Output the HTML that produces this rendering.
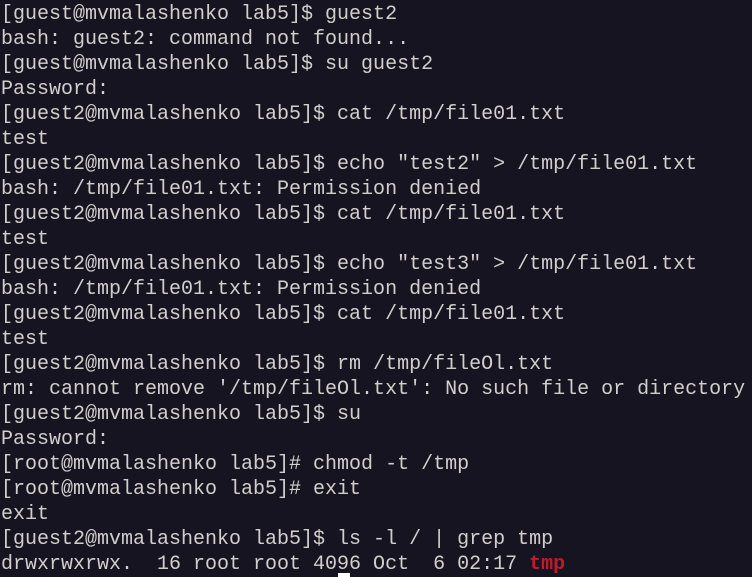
<!DOCTYPE html>
<html><head><style>
html,body{margin:0;padding:0;background:#171421;width:752px;height:577px;overflow:hidden}
pre{margin:0;padding:2px 0 0 1px;font-family:"Liberation Mono","DejaVu Sans Mono",monospace;font-size:20px;line-height:25px;color:#d0cfcc;white-space:pre}
.r{color:#c01c28;font-weight:bold}
.cur{position:absolute;left:338px;top:573px;width:12px;height:4px;background:#fff}
</style></head><body><pre>[guest@mvmalashenko lab5]$ guest2
bash: guest2: command not found...
[guest@mvmalashenko lab5]$ su guest2
Password:
[guest2@mvmalashenko lab5]$ cat /tmp/file01.txt
test
[guest2@mvmalashenko lab5]$ echo "test2" &gt; /tmp/file01.txt
bash: /tmp/file01.txt: Permission denied
[guest2@mvmalashenko lab5]$ cat /tmp/file01.txt
test
[guest2@mvmalashenko lab5]$ echo "test3" &gt; /tmp/file01.txt
bash: /tmp/file01.txt: Permission denied
[guest2@mvmalashenko lab5]$ cat /tmp/file01.txt
test
[guest2@mvmalashenko lab5]$ rm /tmp/fileOl.txt
rm: cannot remove '/tmp/fileOl.txt': No such file or directory
[guest2@mvmalashenko lab5]$ su
Password:
[root@mvmalashenko lab5]# chmod -t /tmp
[root@mvmalashenko lab5]# exit
exit
[guest2@mvmalashenko lab5]$ ls -l / | grep tmp
drwxrwxrwx.  16 root root 4096 Oct  6 02:17 <span class="r">tmp</span></pre><div class="cur"></div></body></html>
